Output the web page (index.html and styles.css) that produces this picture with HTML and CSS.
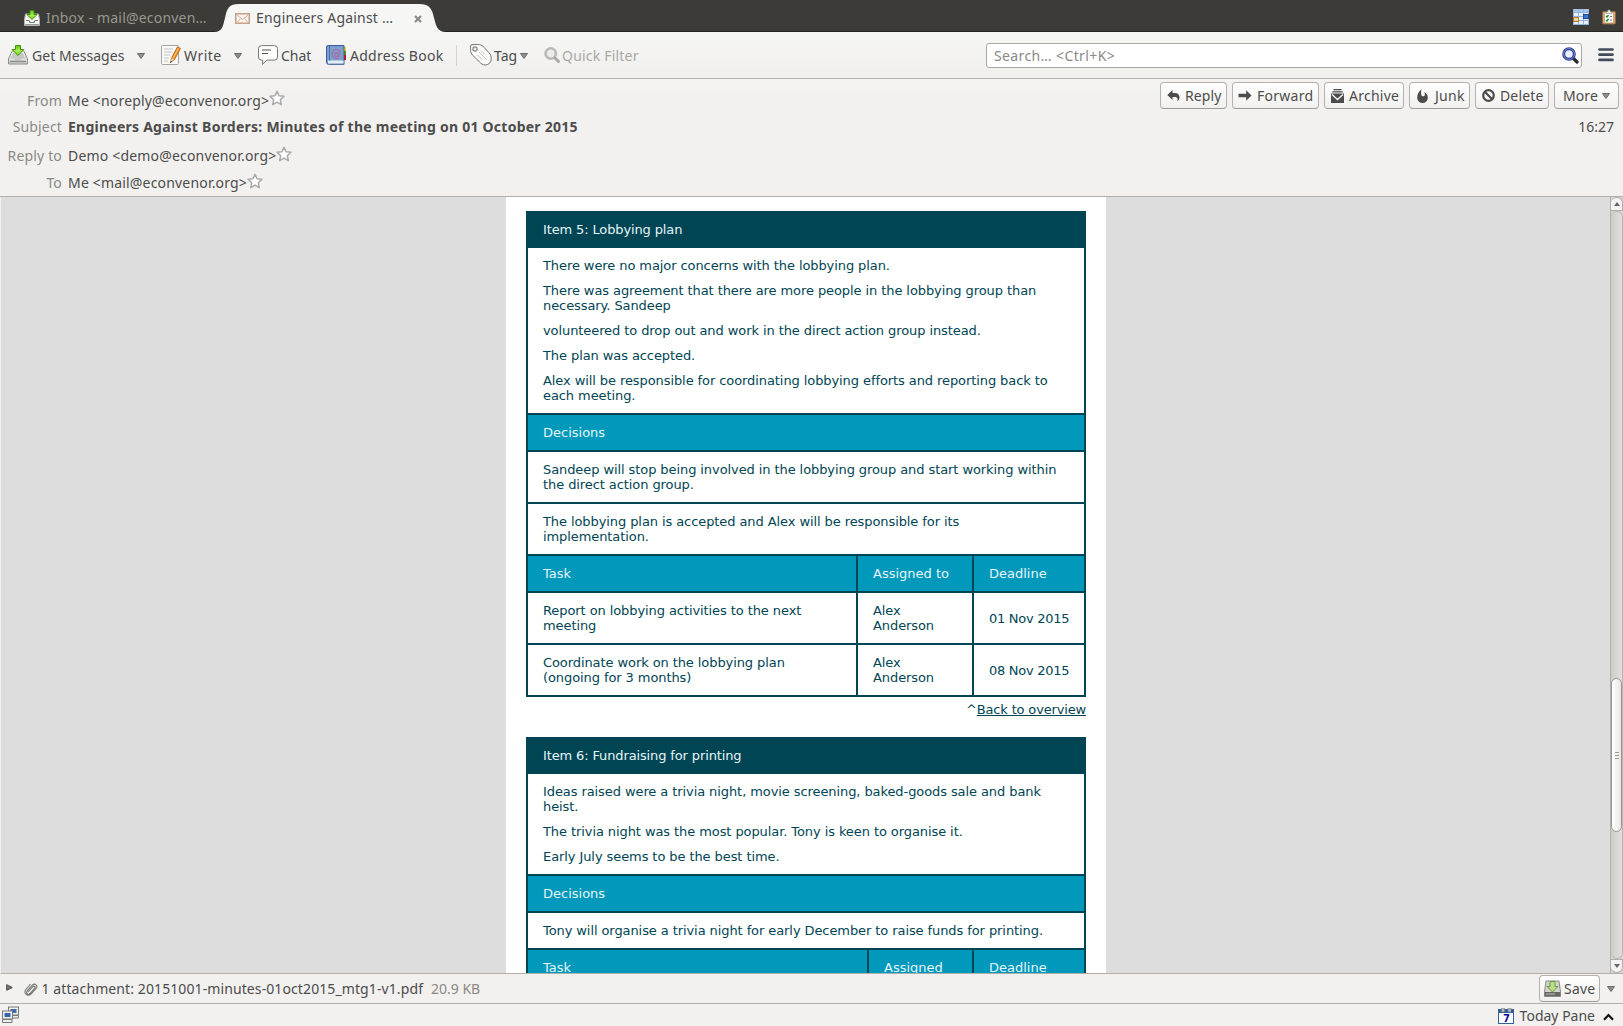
FILE: index.html
```html
<!DOCTYPE html>
<html lang="en">
<head>
<meta charset="utf-8">
<title>Engineers Against Borders</title>
<link rel="stylesheet" href="styles.css">
</head>
<body>
<svg class="defs" width="0" height="0" aria-hidden="true">
  <defs>
    <linearGradient id="green" x1="0" y1="0" x2="0" y2="1"><stop offset="0" stop-color="#5cc616"/><stop offset=".5" stop-color="#a8ee4f"/><stop offset="1" stop-color="#6fd01e"/></linearGradient>
    <linearGradient id="tray" x1="0" y1="0" x2="0" y2="1"><stop offset="0" stop-color="#fdfdfd"/><stop offset="1" stop-color="#cfcfcb"/></linearGradient>
    <symbol id="inbox" viewBox="0 0 20 20">
      <path d="M4.200 6h11.600l3.700 8v5H.5v-5z" fill="url(#tray)" stroke="#8b8d88"/>
      <path d="M5 8h10l2.500 5.500H14l-1.500 2h-5l-1.500-2H2.500z" fill="#c6c8c3"/>
      <path d="M2 16.500h16" stroke="#8b8d88" stroke-width="1.500"/>
      <path d="M7.500.5h5v4h3.300L10 10.500 4.200 4.500h3.300z" fill="url(#green)" stroke="#3d9406"/>
    </symbol>
    <symbol id="inbox-small" viewBox="0 0 16 16">
      <path d="M1.500 4h13l1 6v5.500H.5V10z" fill="#f7f7f5" stroke="#b5b6b2"/>
      <path d="M2 10.500h3l1 2h4l1-2h3" fill="none" stroke="#777974" stroke-width="1.200"/>
      <path d="M1 14.500h14" stroke="#999b96"/>
      <path d="M6 .5h4v4h3L8 9.500 3 4.500h3z" fill="url(#green)" stroke="#3d9406"/>
    </symbol>
    <symbol id="star" viewBox="0 0 16 16">
      <path d="M8 1.200l2 4.600 5 .5-3.700 3.400 1 4.900L8 12.100l-4.300 2.500 1-4.900L1 6.300l5-.5z" fill="#fff" stroke="#a9a9a9" stroke-width="1.500" stroke-linejoin="round"/>
    </symbol>
    <symbol id="down" viewBox="0 0 8 6"><path d="M.5.5h7L4 5.500z" fill="#8f8f8c" stroke="#6a6a67" stroke-linejoin="round"/></symbol>
  </defs>
</svg>

<div class="window">
  <div class="tabbar">
    <div class="tab idle"><svg width="16" height="16"><use href="#inbox-small"/></svg><span>Inbox - mail@econven…</span></div>
    <div class="tab active">
      <svg class="tab-shape" width="236" height="28" viewBox="0 0 236 28"><path d="M0 28C9 28 9 21 11 14 13 4 15 0 25 0H205C215 0 218 4 220 14 222 21 223 28 232 28z" fill="#f6f6f4"/></svg>
      <svg class="mail" width="15" height="11" viewBox="0 0 15 11"><rect x=".75" y=".75" width="13.500" height="9.500" fill="#fdf3ec" stroke="#c6a28b" stroke-width="1.500"/><path d="M2 2l5.500 4.500L13 2M2 9.500L5.500 5.500M13 9.500L9.500 5.500" fill="none" stroke="#d2b19b"/></svg>
      <span>Engineers Against …</span>
      <svg class="close" width="8" height="8" viewBox="0 0 8 8"><path d="M1 1l6 6M7 1L1 7" stroke="#8a8a87" stroke-width="2.200"/></svg>
    </div>
    <div class="tab-tools">
      <svg width="16" height="16" viewBox="0 0 16 16"><path d="M0 0h16v16H0z" fill="#e8f0fa"/><path d="M0 0h16v3H0z" fill="#a9c5e8"/><path d="M0 3.500h16M0 7.500h16M0 11.500h16M5.500 0v16M10.500 0v16M.5 0v16M0 15.500h16M15.500 0v16" stroke="#94b4de"/><rect x=".5" y="8.500" width="5" height="4" fill="#f3d392" stroke="#ac7d35"/><rect x="10.500" y="5.500" width="5" height="4" fill="#3a75cc" stroke="#1e4c9a"/></svg>
      <svg width="14" height="16" viewBox="0 0 14 16"><rect x=".5" y="2.500" width="13" height="12.500" rx="1" fill="#d7a876" stroke="#8c643d"/><path d="M3 4h8v9.500H3z" fill="#f6f9fb"/><path d="M4 4.500V3h1.500L6 1h2l.5 2H10v1.500z" fill="#eee" stroke="#888" stroke-width=".6"/><path d="M4 7l1 1 1.500-2M4 11l1 1 1.500-2" stroke="#149427" stroke-width="1.300" fill="none"/><path d="M8 7.500h2M8 11h2" stroke="#779"/></svg>
    </div>
  </div>

  <div class="toolbar">
    <div class="tool get"><svg width="20" height="20"><use href="#inbox"/></svg><span>Get Messages</span><svg class="arrow" width="8" height="6"><use href="#down"/></svg></div>
    <div class="tool write">
      <svg width="20" height="20" viewBox="0 0 20 20"><rect x=".5" y=".5" width="17" height="19" rx="1" fill="#f8f8f7" stroke="#a3a5a0"/><path d="M3 4h9M3 7h8M3 10h6M3 13h5M3 16h4" stroke="#c3c4c2"/><path d="M9.500 17.500l1.300-5L16.500 1.800l3 1.600-5.800 10.800z" fill="#f59122" stroke="#a85a0b" stroke-width=".8"/><path d="M17.800 2.600L12 13.500" stroke="#ffc372"/><path d="M9.500 17.500l1.100-4.200 2.600 1.300z" fill="#e9c99a"/><path d="M9.300 18l.5-2 1.300.7z" fill="#222"/></svg>
      <span>Write</span><svg class="arrow" width="8" height="6"><use href="#down"/></svg></div>
    <div class="tool chat">
      <svg width="20" height="20" viewBox="0 0 20 20"><path d="M3.500.6h13a3 3 0 013 3v8.500a3 3 0 01-3 3H9l-4.500 4.300.3-4.300H3.500a3 3 0 01-3-3V3.600a3 3 0 013-3z" fill="#fcfcfb" stroke="#777975"/><path d="M4 5h9M4 8.500h6" stroke="#555753" stroke-width="1.200"/></svg>
      <span>Chat</span></div>
    <div class="tool book">
      <svg width="20" height="20" viewBox="0 0 20 20"><path d="M16 2h4v4h-4z" fill="#efd30b"/><path d="M16 6h4v4h-4z" fill="#429c15"/><path d="M16 10h4v5h-4z" fill="#c80f0f"/><path d="M2 .5h16v18.800H2.500a2 2 0 01-2-2V2A1.500 1.500 0 012 .5z" fill="#7d9dca" stroke="#335e9b"/><path d="M2 15.500h15.500v3H2z" fill="#e4ecf5"/><path d="M3.500 1v14.500" stroke="#4a73ac"/><text x="10.500" y="12" class="at">@</text></svg>
      <span>Address Book</span></div>
    <div class="separator"></div>
    <div class="tool tag">
      <svg width="22" height="22" viewBox="0 0 22 22"><path d="M.6 2A1.500 1.500 0 012 .6h7.500c2 .3 3 1.200 4.500 2.700l4.800 5.200c1.700 2 2.500 4 2.500 6.500-.2 3.500-2.800 5.800-6 6-2.500 0-4.200-1.300-5.800-3L3 11.500C1.200 9.500.6 8.500.6 6.500z" fill="#fbfbfa" stroke="#73756f"/><rect x="3" y="3" width="4" height="4" rx="1" fill="#eee" stroke="#656760"/><path d="M9 8l8 8M7.500 11l5 5M11 6.500l4 4" stroke="#c2c3c0"/></svg>
      <span>Tag</span><svg class="arrow" width="8" height="6"><use href="#down"/></svg></div>
    <div class="tool filter">
      <svg width="16" height="16" viewBox="0 0 16 16"><circle cx="6.700" cy="6.500" r="5.200" fill="#ebebea" stroke="#b9b9b8" stroke-width="2.600"/><path d="M11 11l3.500 3.500" stroke="#a9a9a8" stroke-width="3" stroke-linecap="round"/></svg>
      <span>Quick Filter</span></div>
    <div class="search"><span>Search… &lt;Ctrl+K&gt;</span>
      <svg width="17" height="17" viewBox="0 0 17 17"><path d="M11 11l4 4" stroke="#282828" stroke-width="3.200" stroke-linecap="round"/><circle cx="7" cy="7" r="5.300" fill="#eaeefa" stroke="#2d3e8e" stroke-width="3"/><circle cx="7" cy="7" r="5.400" fill="none" stroke="#7188d3" stroke-width="1"/></svg></div>
    <svg class="menu" width="16" height="14" viewBox="0 0 16 14"><path d="M1.500 1.500h13M1.500 6.700h13M1.500 11.900h13" stroke="#414b5b" stroke-width="2.700" stroke-linecap="round"/></svg>
  </div>

  <div class="headers">
    <div class="fields">
      <div class="field from"><label>From</label><span>Me &lt;noreply@econvenor.org&gt;</span><svg width="16" height="16"><use href="#star"/></svg></div>
      <div class="field subject"><label>Subject</label><b>Engineers Against Borders: Minutes of the meeting on 01 October 2015</b></div>
      <div class="field replyto"><label>Reply to</label><span>Demo &lt;demo@econvenor.org&gt;</span><svg width="16" height="16"><use href="#star"/></svg></div>
      <div class="field to"><label>To</label><span>Me &lt;mail@econvenor.org&gt;</span><svg width="16" height="16"><use href="#star"/></svg></div>
    </div>
    <div class="actions">
      <div class="buttons">
        <div class="button reply"><svg width="13" height="13" viewBox="0 0 13 13"><path d="M5.500 1v3h2.300c3.300 0 4.700 2 4.700 4.500 0 1.800-.8 3-2.500 3.800.6-1 .7-1.700.5-2.500-.3-1.200-1.200-1.700-2.700-1.700H5.500V11L.3 6z" fill="#4c4c4c"/></svg><span>Reply</span></div>
        <div class="button forward"><svg width="14" height="13" viewBox="0 0 14 13"><path d="M.5 4.700h7.700V1.200l5.300 5.300-5.300 5.300V8.300H.5z" fill="#4c4c4c"/></svg><span>Forward</span></div>
        <div class="button archive"><svg width="13" height="14" viewBox="0 0 13 14"><path d="M2.500 0h8v1.300h-8zM1.300 2.300h10.400v1.300H1.300zM0 4.500h13V14H0z" fill="#4c4c4c"/><path d="M1 5.500l5.500 5 5.500-5" fill="none" stroke="#f5f5f4" stroke-width="1.500"/></svg><span>Archive</span></div>
        <div class="button junk"><svg width="11" height="14" viewBox="0 0 11 14"><path d="M4.600.3C3.800 2.500 4 4 4.300 6 4.800 7.800 7.300 7.800 7.800 5.900c.2-1.100-.1-1.900-.7-2.900 2.300 1.200 3.700 3 3.700 5.700a5.300 5.300 0 01-10.600 0C.2 5 2 2.200 4.600.3z" fill="#4c4c4c"/></svg><span>Junk</span></div>
        <div class="button delete"><svg width="13" height="13" viewBox="0 0 13 13"><circle cx="6.500" cy="6.500" r="5.300" fill="none" stroke="#4c4c4c" stroke-width="2.200"/><path d="M3 3l7 7" stroke="#4c4c4c" stroke-width="2.200"/></svg><span>Delete</span></div>
        <div class="button more"><span>More</span><svg width="8" height="6"><use href="#down"/></svg></div>
      </div>
      <div class="time">16:27</div>
    </div>
  </div>

  <div class="message">
    <div class="sheet">
      <table>
        <colgroup><col class="c-task"><col class="c-who"><col class="c-date"></colgroup>
        <tr class="title"><td colspan="3">Item 5: Lobbying plan</td></tr>
        <tr><td colspan="3"><p>There were no major concerns with the lobbying plan.</p><p>There was agreement that there are more people in the lobbying group than necessary. Sandeep</p><p>volunteered to drop out and work in the direct action group instead.</p><p>The plan was accepted.</p><p>Alex will be responsible for coordinating lobbying efforts and reporting back to each meeting.</p></td></tr>
        <tr class="band"><td colspan="3">Decisions</td></tr>
        <tr><td colspan="3">Sandeep will stop being involved in the lobbying group and start working within the direct action group.</td></tr>
        <tr><td colspan="3">The lobbying plan is accepted and Alex will be responsible for its<br>implementation.</td></tr>
        <tr class="band"><td>Task</td><td>Assigned to</td><td>Deadline</td></tr>
        <tr><td>Report on lobbying activities to the next meeting</td><td>Alex Anderson</td><td class="date">01 Nov 2015</td></tr>
        <tr><td>Coordinate work on the lobbying plan (ongoing for 3 months)</td><td>Alex Anderson</td><td class="date">08 Nov 2015</td></tr>
      </table>
      <div class="back">^<a>Back to overview</a></div>
      <table>
        <colgroup><col class="c-task-wide"><col class="c-who-narrow"><col class="c-date"></colgroup>
        <tr class="title"><td colspan="3">Item 6: Fundraising for printing</td></tr>
        <tr><td colspan="3"><p>Ideas raised were a trivia night, movie screening, baked-goods sale and bank heist.</p><p>The trivia night was the most popular. Tony is keen to organise it.</p><p>Early July seems to be the best time.</p></td></tr>
        <tr class="band"><td colspan="3">Decisions</td></tr>
        <tr><td colspan="3">Tony will organise a trivia night for early December to raise funds for printing.</td></tr>
        <tr class="band"><td>Task</td><td>Assigned</td><td>Deadline</td></tr>
      </table>
    </div>
    <div class="scrollbar">
      <div class="step up"><svg width="6" height="4" viewBox="0 0 6 4"><path d="M0 4l3-4 3 4z" fill="#666"/></svg></div>
      <div class="trough"><div class="thumb"><i></i><i></i><i></i></div></div>
      <div class="step dn"><svg width="6" height="4" viewBox="0 0 6 4"><path d="M0 0l3 4 3-4z" fill="#666"/></svg></div>
    </div>
  </div>

  <div class="attachments">
    <svg class="twisty" width="7" height="7" viewBox="0 0 7 7"><path d="M.7.7v5.600L6.300 3.500z" fill="#777" stroke="#4a4a48" stroke-linejoin="round"/></svg>
    <svg class="clip" width="14" height="14" viewBox="0 0 14 14"><path d="M4 10l5-5.500c1.200-1 2.800.4 1.700 1.700L6 11.500c-2 1.800-4.500-.6-2.800-2.700L8.500 3c2.500-2.300 5.800.7 3.700 3.400L7 12.200c-3 2.600-7.500-.3-5.500-4.200l5-6" fill="none" stroke="#777974" stroke-width="1.100"/></svg>
    <span class="filename">1 attachment: 20151001-minutes-01oct2015_mtg1-v1.pdf</span><span class="size">20.9 KB</span>
    <div class="button save"><svg width="17" height="17" viewBox="0 0 17 17"><path d="M2 1h13l1.500 11v4.500H.5V12z" fill="#d3d4d1" stroke="#898b86"/><path d="M.8 12h15.400v4H.8z" fill="#666864"/><path d="M2 14h9" stroke="#b9bbb7"/><path d="M6 1.500h5v5h3L8.500 12 3 6.500h3z" fill="#b9dd88" stroke="#6a9a3c"/></svg><span>Save</span></div>
    <svg class="save-arrow" width="8" height="6"><use href="#down"/></svg>
  </div>

  <div class="status">
    <svg class="online" width="17" height="17" viewBox="0 0 17 17"><rect x="6.500" y="1" width="10" height="8" fill="#f1f1ef" stroke="#777974"/><path d="M8.500 3h6v4h-6z" fill="#3c69b1"/><path d="M8.500 9.500h8v2.500h-8z" fill="#eee" stroke="#777974"/><rect x=".5" y="5" width="10" height="8" fill="#f1f1ef" stroke="#777974"/><path d="M2.500 7h6v4h-6z" fill="#3464ac"/><path d="M.5 13.500h9.500v3H.5z" fill="#eee" stroke="#777974"/></svg>
    <div class="today">
      <svg width="16" height="16" viewBox="0 0 16 16"><rect x=".5" y="1.500" width="15" height="14" fill="#fff" stroke="#345f9a"/><path d="M0 2h16v3H0z" fill="#345f9a"/><path d="M3.500 0h3v4h-3zM10 0h3v4h-3z" fill="#b9bbb7" stroke="#777" stroke-width=".5"/><text x="8.500" y="13.500" class="day">7</text></svg>
      <span>Today Pane</span>
      <svg class="chevron" width="11" height="8" viewBox="0 0 11 8"><path d="M1 6.800L5.500 2 10 6.800" fill="none" stroke="#111" stroke-width="2.200"/></svg>
    </div>
  </div>
</div>
</body>
</html>
```

FILE: styles.css
```css
* { box-sizing: border-box; }
body { margin: 0; font: 14px/20px "Noto Sans", sans-serif; letter-spacing: .1px; color: #4c4c4c; background: #f2f1ef; }
svg { display: block; flex: none; }
.defs { position: absolute; }
span, b, label { white-space: nowrap; }
.window { display: flex; flex-direction: column; width: 1623px; height: 1026px; overflow: hidden; }

.tabbar { display: flex; height: 32px; flex: none; background: #3c3b37; border-bottom: 1px solid #262522; }
.tab { display: flex; align-items: center; }
.idle { width: 214px; padding: 5px 0 0 24px; gap: 6px; color: #9a978f; }
.idle span { letter-spacing: .2px; }
.active { position: relative; width: 236px; padding: 4px 0 0 21px; height: 32px; }
.active span { width: 136px; margin-left: 6px; letter-spacing: .2px; }
.tab-shape { position: absolute; left: 0; top: 4px; }
.mail, .active span, .close { position: relative; }
.close { margin: 2px 0 0 22px; }
.tab-tools { display: flex; gap: 13px; margin-left: auto; padding: 9px 7px 0 0; }

.toolbar { display: flex; align-items: center; height: 47px; flex: none; background: linear-gradient(#f6f6f4, #f0efed); border-bottom: 1px solid #b1afab; }
.tool { display: flex; align-items: center; flex: none; }
.tool > svg:first-child { margin-top: -1px; }
.tool span { margin-top: 1px; }
.tool .arrow { margin-top: 2px; }
.get { width: 153px; padding-left: 8px; gap: 4px; }
.get span { letter-spacing: .05px; }
.get .arrow { margin-left: 9px; }
.write { width: 97px; padding-left: 8px; gap: 3px; }
.write span { width: 39px; letter-spacing: .5px; }
.write .arrow { margin-left: 8px; }
.chat { width: 68px; padding-left: 8px; gap: 3px; }
.chat span { letter-spacing: -.05px; }
.book { width: 130px; padding-left: 8px; gap: 4px; }
.book span { letter-spacing: .28px; }
.at { font: 10px "DejaVu Sans", sans-serif; fill: #b75c9d; text-anchor: middle; }
.separator { width: 1px; height: 21px; background: #d3d2cf; margin: 0 13px 0 8px; }
.tag { width: 74px; gap: 2px; }
.tag span { letter-spacing: 0; }
.tag .arrow { margin-left: 1px; }
.filter { gap: 2px; color: #aaa8a3; }
.filter span { letter-spacing: .2px; }
.search { display: flex; align-items: center; width: 596px; height: 25px; margin: 0 16px 0 auto; padding: 0 2px 0 7px; background: #fff; border: 1px solid #aaa8a4; border-radius: 3px; color: #8a8987; letter-spacing: .38px; }
.search span { margin-top: 2px; }
.search svg { margin: 0 0 0 auto; }
.menu { margin-right: 9px; }

.headers { display: flex; justify-content: space-between; height: 118px; flex: none; background: linear-gradient(#f4f3f2, #f2f1ef 20px); border-bottom: 1px solid #b1afab; }
.fields { padding-top: 12px; }
.field { display: flex; height: 20px; }
.field label { width: 62px; margin-right: 6px; text-align: right; color: #8b8985; letter-spacing: .16px; }
.field span { letter-spacing: .18px; }
.field svg { margin: 0; }
.from svg { margin-top: -1px; }
.field b { letter-spacing: .245px; }
.subject { margin-top: 6px; }
.replyto { margin-top: 9px; }
.to { margin-top: 7px; }
.actions { padding: 3px 4px 0 0; }
.buttons { display: flex; gap: 5px; }
.button { display: flex; align-items: center; height: 27px; border: 1px solid #b4b2ae; border-bottom-color: #9d9b97; border-radius: 4px; background: linear-gradient(#fff, #f1f0ee); }
.reply { width: 67px; padding-left: 6px; gap: 5px; }
.forward { width: 87px; padding-left: 5px; gap: 5px; }
.forward span { letter-spacing: .25px; }
.archive { width: 80px; padding-left: 6px; gap: 5px; }
.archive span { letter-spacing: .25px; }
.junk { width: 61px; padding-left: 7px; gap: 7px; }
.junk span { letter-spacing: .25px; }
.delete { width: 74px; padding-left: 6px; gap: 5px; }
.delete span { letter-spacing: .15px; }
.more { width: 65px; padding-left: 8px; gap: 4px; }
.time { margin: 8px 5px 0 0; text-align: right; letter-spacing: 0; }

.message { display: flex; height: 777px; flex: none; justify-content: center; overflow: hidden; position: relative; background: #ddd; border-left: 1px solid #f2f1ef; border-bottom: 1px solid #b1afab; }
.sheet { width: 600px; height: 776px; margin-right: 12px; padding: 14px 20px 0; background: #fff; overflow: hidden; font: 13px/15px "DejaVu Sans", sans-serif; letter-spacing: -.085px; color: #004554; }
table { width: 560px; table-layout: fixed; border-collapse: collapse; }
td { padding: 10px 15px; border: 2px solid #004554; vertical-align: middle; }
.c-task { width: 330px; }
.c-who { width: 116px; }
.c-task-wide { width: 341px; }
.c-who-narrow { width: 105px; }
.c-date { width: 112px; }
.date { white-space: nowrap; letter-spacing: -.27px; }
p { margin: 0 0 10px; }
p:last-child { margin-bottom: 0; }
.title td { padding: 9px 15px; background: #004554; color: #e6f5f9; letter-spacing: -.13px; }
.band td { background: #0099bc; color: #e6f5f9; letter-spacing: 0; }
.back { margin: 5px 0 20px; height: 15px; text-align: right; letter-spacing: -.16px; }
.back a { text-decoration: underline; }

.scrollbar { position: absolute; right: 0; top: 0; width: 13px; height: 776px; display: flex; flex-direction: column; border-left: 1px solid #b1afab; background: #d8d6d3; }
.step { display: flex; align-items: center; justify-content: center; height: 14px; background: #f5f4f3; border: 1px solid #b1afab; border-left: 0; }
.up { border-radius: 6px 6px 0 0; }
.dn { border-radius: 0 0 6px 6px; }
.trough { flex: 1; padding-top: 466px; background: linear-gradient(90deg, #cfcdca, #e2e0de); border: 1px solid #b9b7b3; border-width: 1px 1px 1px 0; border-radius: 6px; }
.thumb { height: 154px; display: flex; flex-direction: column; align-items: center; justify-content: center; gap: 2px; border: 1px solid #98968f; border-radius: 6px; background: linear-gradient(90deg, #fff, #e7e6e4); }
.thumb i { width: 4px; height: 1px; background: #99978f; }

.attachments { display: flex; align-items: center; height: 30px; flex: none; padding-left: 6px; border-bottom: 1px solid #b1afab; }
.twisty { margin-top: -3px; }
.clip { margin-left: 11px; }
.filename { margin-left: 3.5px; width: 389.5px; }
.size { color: #8b8985; letter-spacing: 0; }
.save { width: 61px; height: 27px; margin: 0 7px 0 auto; padding-left: 4px; gap: 3px; }
.save span { letter-spacing: .2px; }
.save-arrow { margin: 1px 8px 0 0; }
.status { display: flex; justify-content: space-between; height: 22px; flex: none; padding: 2px 9px 0 2px; }
.online { margin-top: 0; }
.today { display: flex; gap: 6px; height: 20px; }
.today svg { margin-top: 2px; }
.today span { letter-spacing: 0; }
.today .chevron { margin: 7px 0 0 2px; }
.day { font: bold 10px "DejaVu Sans", sans-serif; fill: #0a0aa4; text-anchor: middle; }
```
